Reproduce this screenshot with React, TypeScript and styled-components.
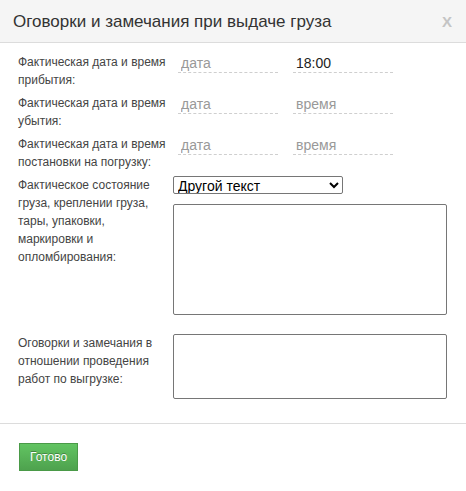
import React from 'react';
import styled, { createGlobalStyle } from 'styled-components';

const GlobalStyle = createGlobalStyle`
  html, body {
    margin: 0;
    padding: 0;
    background: #fff;
  }

  body {
    font-family: 'Liberation Sans', Arial, sans-serif;
  }
`;

const StyledModal = styled.section`
  width: 466px;
  min-height: 491px;
  display: flex;
  flex-direction: column;
  background: #fff;
  font-family: 'Liberation Sans', Arial, sans-serif;
`;

const Header = styled.header`
  height: 42px;
  display: flex;
  align-items: center;
  justify-content: space-between;
  padding: 0 13px;
  background: #f5f5f5;
  border-bottom: 1px solid #dcdcdc;

  h2 {
    margin: 0;
    font-size: 17px;
    font-weight: 400;
    color: #333;
    line-height: 1;
  }
`;

const CloseButton = styled.button`
  border: none;
  background: none;
  padding: 0;
  margin-right: 1px;
  font-family: 'Liberation Sans', Arial, sans-serif;
  font-size: 15px;
  font-weight: bold;
  color: #c4c4c4;
  cursor: pointer;
`;

const Body = styled.div`
  display: flex;
  flex-direction: column;
  padding: 10px 19px 24px 18px;
`;

const Row = styled.div<{ $gap?: number }>`
  display: grid;
  grid-template-columns: 155px 1fr;
  margin-bottom: ${({ $gap }) => ($gap ?? 5)}px;

  &:last-of-type {
    margin-bottom: 0;
  }
`;

const Label = styled.label`
  font-size: 12px;
  line-height: 18px;
  color: #444;
  padding-right: 4px;
`;

const DateTime = styled.div`
  display: flex;
  align-items: flex-start;
  gap: 15px;
  padding-left: 5px;
`;

const DashedInput = styled.input`
  width: 100px;
  height: 20px;
  box-sizing: border-box;
  border: none;
  border-bottom: 1px dashed #cfcfcf;
  padding: 0 3px;
  outline: none;
  font-family: 'Liberation Sans', Arial, sans-serif;
  font-size: 14px;
  color: #222;

  &::placeholder {
    color: #999;
  }
`;

const Controls = styled.div`
  display: flex;
  flex-direction: column;
  align-items: flex-start;
  gap: 10px;
`;

const Select = styled.select`
  width: 170px;
  height: 18px;
  font-family: 'Liberation Sans', Arial, sans-serif;
  font-size: 14px;
  color: #000;
  border: 1px solid #767676;
  border-radius: 2px;
  padding: 0;
  background: #fff;
`;

const TextArea = styled.textarea<{ $height: number }>`
  width: 274px;
  height: ${({ $height }) => $height}px;
  box-sizing: border-box;
  border: 1px solid #767676;
  border-radius: 2px;
  resize: none;
  margin: 0;
  font-family: 'Liberation Sans', Arial, sans-serif;
  font-size: 13px;
`;

const Footer = styled.footer`
  border-top: 1px solid #dcdcdc;
  padding: 19px;
`;

const DoneButton = styled.button`
  height: 28px;
  padding: 0 10px;
  font-family: 'Liberation Sans', Arial, sans-serif;
  font-size: 12px;
  color: #fff;
  text-shadow: 0 -1px 0 rgba(0, 0, 0, 0.3);
  background: linear-gradient(to bottom, #62c462, #4ea24e);
  border: 1px solid #4a9a48;
  border-radius: 0;
  cursor: pointer;
`;

interface DateRowProps {
  label: string;
  time?: string;
}

const DateRow = ({ label, time }: DateRowProps) => {
  return (
    <Row>
      <Label>{label}</Label>
      <DateTime>
        <DashedInput placeholder="дата" />
        <DashedInput placeholder="время" defaultValue={time} />
      </DateTime>
    </Row>
  );
};

const App = () => {
  return (
    <StyledModal>
      <GlobalStyle />
      <Header>
        <h2>Оговорки и замечания при выдаче груза</h2>
        <CloseButton>X</CloseButton>
      </Header>

      <Body>
        <DateRow label="Фактическая дата и время прибытия:" time="18:00" />
        <DateRow label="Фактическая дата и время убытия:" />
        <DateRow label="Фактическая дата и время постановки на погрузку:" />

        <Row $gap={19}>
          <Label>Фактическое состояние груза, креплении груза, тары, упаковки, маркировки и опломбирования:</Label>
          <Controls>
            <Select defaultValue="other">
              <option value="other">Другой текст</option>
            </Select>
            <TextArea $height={111} />
          </Controls>
        </Row>

        <Row>
          <Label>Оговорки и замечания в отношении проведения работ по выгрузке:</Label>
          <Controls>
            <TextArea $height={65} />
          </Controls>
        </Row>
      </Body>

      <Footer>
        <DoneButton>Готово</DoneButton>
      </Footer>
    </StyledModal>
  );
};

export default App;
